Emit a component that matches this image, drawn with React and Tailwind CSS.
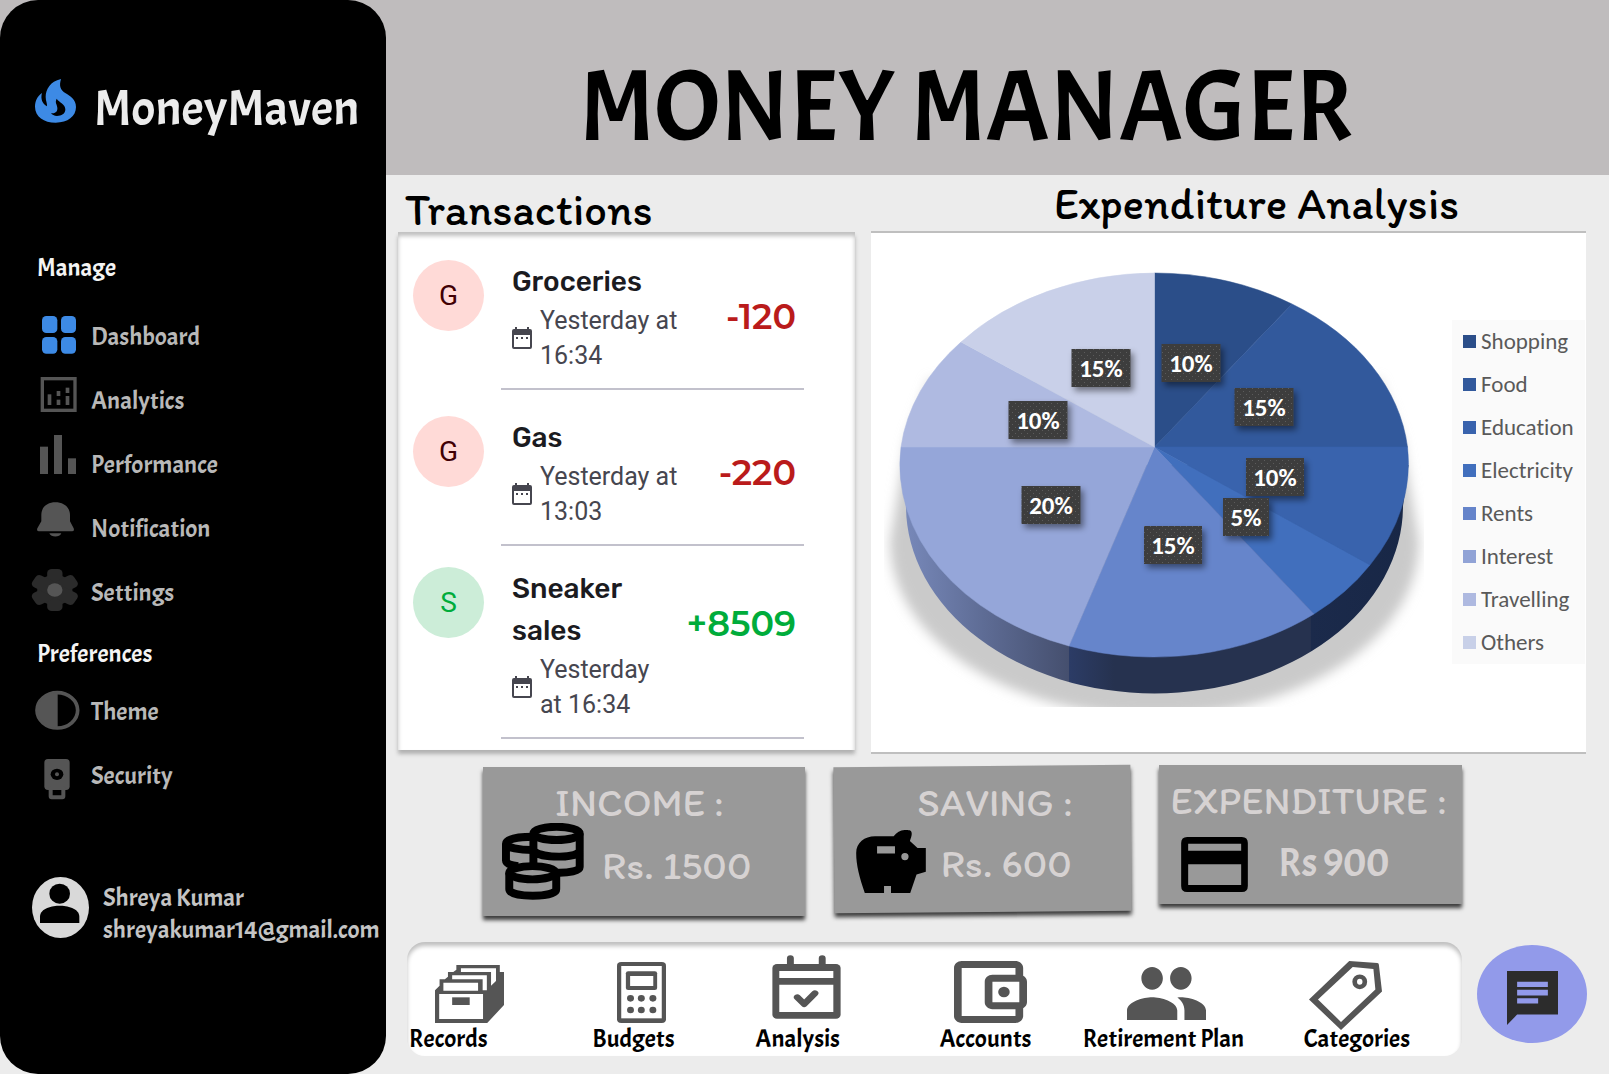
import React from "react";

const display = "font-['Acme','Lato',sans-serif] font-normal";
const rounded = "font-['Itim','Noto_Sans',sans-serif] font-normal";

const manage = [
  {
    label: "Dashboard",
    box: "90 912 150 192",
    art: (
      <g fill="#3d8ae5">
        <rect x="126" y="948" width="46" height="51" rx="13" />
        <rect x="183" y="948" width="45" height="51" rx="13" />
        <rect x="126" y="1011" width="46" height="50" rx="13" />
        <rect x="183" y="1011" width="45" height="50" rx="13" />
      </g>
    ),
  },
  {
    label: "Analytics",
    box: "90 1104 150 192",
    art: (
      <g fill="#555">
        <rect x="127" y="1136" width="98" height="95" fill="none" stroke="#555" strokeWidth="10" />
        <rect x="143" y="1183" width="11" height="32" />
        <rect x="170" y="1173" width="11" height="15" />
        <rect x="170" y="1199" width="11" height="16" />
        <rect x="197" y="1163" width="11" height="16" />
        <rect x="197" y="1188" width="11" height="27" />
      </g>
    ),
  },
  {
    label: "Performance",
    box: "90 36 150 192",
    art: (
      <g fill="#555">
        <rect x="120" y="80" width="24" height="82" />
        <rect x="162" y="45" width="24" height="117" />
        <rect x="204" y="115" width="24" height="47" />
      </g>
    ),
  },
  {
    label: "Notification",
    box: "90 228 150 192",
    art: (
      <g fill="#555">
        <path d="M124 285C124 259 144 247 166 247C189 247 210 260 210 285V304L221 325Q224 334 216 334H117Q109 334 112 325L124 304Z" />
        <path d="M148 340H184C179 353 153 353 148 340Z" />
      </g>
    ),
  },
  {
    label: "Settings",
    box: "90 420 150 192",
    art: (
      <g transform="translate(164.5 510) scale(1.15 1)">
        <g fill="#2b2b2b">
          <circle r="46" />
          <rect x="-20" y="-63" width="40" height="126" rx="12" />
          <rect x="-20" y="-63" width="40" height="126" rx="12" transform="rotate(60)" />
          <rect x="-20" y="-63" width="40" height="126" rx="12" transform="rotate(120)" />
        </g>
        <circle r="20" fill="#555" />
      </g>
    ),
  },
];

const preferences = [
  {
    label: "Theme",
    box: "90 777 150 192",
    art: (
      <g>
        <ellipse cx="172" cy="871" rx="61" ry="53" fill="none" stroke="#555" strokeWidth="11" />
        <path d="M173 818C140 818 111 840 111 871S140 924 173 924Z" fill="#555" />
      </g>
    ),
  },
  {
    label: "Security",
    box: "90 969 150 192",
    art: (
      <g>
        <rect x="133" y="1017" width="76" height="93" rx="11" fill="#555" />
        <rect x="152" y="1104" width="38" height="28" rx="3" fill="none" stroke="#555" strokeWidth="12" />
        <ellipse cx="171" cy="1063" rx="19" ry="17" fill="#000" />
        <ellipse cx="171" cy="1063" rx="6" ry="6" fill="#555" />
      </g>
    ),
  },
];

function MenuList({ items }) {
  return (
    <ul>
      {items.map((item) => (
        <li key={item.label}>
          <a href="#" className="flex h-16 items-center gap-[11px] text-[25px] text-[#b8b8b8]">
            <svg className="h-16 w-[50px] shrink-0" viewBox={item.box} aria-hidden="true">
              {item.art}
            </svg>
            <span className="pt-[3px]">{item.label}</span>
          </a>
        </li>
      ))}
    </ul>
  );
}

function Sidebar() {
  return (
    <aside className={`${display} w-[386px] shrink-0 rounded-[38px] bg-black pl-[30px] pt-[75px]`}>
      <div className="flex h-16 items-center gap-[18px]">
        <svg className="mb-3 ml-[5px] h-11 w-[41px] shrink-0" viewBox="105 237 123 132" aria-hidden="true">
          <path
            fill="#3d8ae5"
            fillRule="evenodd"
            d="M183 237C150 244 137 270 137 291C137 303 142 310 141 319C127 312 121 296 126 279C112 288 105 304 105 320C105 350 132 368 167 368C203 368 228 349 228 321C228 299 210 288 197 280C180 269 177 257 183 237ZM170 296C178 308 196 312 196 328C196 342 184 348 171 348C163 348 156 344 153 339C166 342 173 334 172 323C171 312 164 308 170 296Z"
          />
        </svg>
        <span className="pt-[3px] text-[50px] leading-[64px] text-[#ececec]">MoneyMaven</span>
      </div>
      <nav aria-label="Sidebar">
        <h2 className="mt-[113px] pl-[7px] text-[25px] leading-8 text-[#f4f4f4]">Manage</h2>
        <div className="mt-5">
          <MenuList items={manage} />
        </div>
        <h2 className="mt-[14px] pl-[7px] text-[25px] leading-8 text-[#f4f4f4]">Preferences</h2>
        <div className="mt-[9px]">
          <MenuList items={preferences} />
        </div>
      </nav>
      <div className="mt-[70px] flex items-start gap-[14px]">
        <svg className="ml-0.5 h-[61px] w-[57px] shrink-0" viewBox="96 171 171 183" aria-hidden="true">
          <ellipse cx="181.500" cy="262.500" rx="85.500" ry="91.500" fill="#d9d9d9" />
          <ellipse cx="179" cy="221" rx="31" ry="30" />
          <path d="M120 309V290C120 264 158 257 179 257S238 264 238 290V309Z" />
        </svg>
        <div className="pt-[5px] text-[25px] leading-8 text-[#c4c4c4]">
          <p>Shreya Kumar</p>
          <p>shreyakumar14@gmail.com</p>
        </div>
      </div>
    </aside>
  );
}

const transactions = [
  { name: "Groceries", when: "Yesterday at 16:34", amount: "-120" },
  { name: "Gas", when: "Yesterday at 13:03", amount: "-220" },
  { name: "Sneaker sales", when: "Yesterday at 16:34", amount: "+8509" },
];

function Transactions() {
  return (
    <section>
      <h2 className={`${rounded} flex h-[57px] items-center pl-[7px] pt-3 text-[45px]`}>Transactions</h2>
      <ul className="bg-white pb-[11px] pl-[15px] pr-[51px] pt-2 shadow-[inset_0_4px_4px_rgba(0,0,0,0.25),0_4px_4px_rgba(0,0,0,0.25)]">
        {transactions.map((t) => {
          const income = t.amount.startsWith("+");
          return (
            <li key={t.name} className="flex items-start gap-[17px] pt-5 nth-2:pt-[26px] nth-3:pt-[21px]">
              <span
                className={`flex size-[71px] shrink-0 items-center justify-center rounded-full font-['Roboto',sans-serif] text-[28px] ${
                  income ? "bg-[#ccedd8] text-[#00ac3b]" : "bg-[#ffdad7] text-[#410004]"
                }`}
              >
                {t.name[0]}
              </span>
              <div className="flex flex-1 items-start gap-4 border-b-2 border-[#c2c1cc] pb-[15px] pl-[11px] pr-2">
                <div className="min-w-0 flex-1">
                  <h3 className="pt-px font-['Rubik','Inter',sans-serif] text-[28px] font-medium leading-[42px] text-[#1b1b1f]">
                    {t.name}
                  </h3>
                  <p className="flex items-center gap-2 font-['Roboto',sans-serif] text-[25px] leading-[35px] text-[#46464f]">
                    <svg className="h-[22px] w-5 shrink-0" viewBox="0 0 20 22" aria-hidden="true">
                      <path
                        fill="currentColor"
                        fillRule="evenodd"
                        d="M3 0H5V2H15V0H17V2H18Q20 2 20 4V20Q20 22 18 22H2Q0 22 0 20V4Q0 2 2 2H3ZM2 8V20H18V8ZM4 10H6V12H4ZM9 10H11V12H9ZM14 10H16V12H14Z"
                      />
                    </svg>
                    <span>{t.when}</span>
                  </p>
                </div>
                <span
                  className={`shrink-0 pt-[37px] font-['Montserrat','Inter',sans-serif] text-[35px] font-semibold leading-10 ${
                    income ? "text-[#00ac3b]" : "text-[#ba1b1b]"
                  }`}
                >
                  {t.amount}
                </span>
              </div>
            </li>
          );
        })}
      </ul>
    </section>
  );
}

const legend = [
  { label: "Shopping", swatch: "bg-[#2b4e89]" },
  { label: "Food", swatch: "bg-[#32599c]" },
  { label: "Education", swatch: "bg-[#3963ad]" },
  { label: "Electricity", swatch: "bg-[#416fbd]" },
  { label: "Rents", swatch: "bg-[#6584ca]" },
  { label: "Interest", swatch: "bg-[#91a3d6]" },
  { label: "Travelling", swatch: "bg-[#aeb9e0]" },
  { label: "Others", swatch: "bg-[#c8d0e8]" },
];

const slices = [
  { fill: "#2b4e89", from: "1154.5 273", to: "1292 304" },
  { fill: "#32599c", from: "1292 304", to: "1407.5 447" },
  { fill: "#3963ad", from: "1407.5 447", to: "1370 565" },
  { fill: "#416fbd", from: "1370 565", to: "1314 614" },
  { fill: "#6685cb", from: "1314 614", to: "1069 646" },
  { fill: "#95a6d9", from: "1069 646", to: "901 447" },
  { fill: "#afbae1", from: "901 447", to: "961 342" },
  { fill: "#c9d0e9", from: "961 342", to: "1154.5 273" },
];

const shares = [
  { text: "10%", x: 1191, y: 363, w: 59 },
  { text: "15%", x: 1264, y: 407, w: 59 },
  { text: "10%", x: 1275, y: 477, w: 58 },
  { text: "5%", x: 1246, y: 517, w: 46 },
  { text: "15%", x: 1173, y: 545, w: 58 },
  { text: "20%", x: 1051, y: 505, w: 59 },
  { text: "10%", x: 1038, y: 420, w: 59 },
  { text: "15%", x: 1101, y: 368, w: 59 },
];

function PieChart() {
  return (
    <svg className="min-w-0 flex-1" viewBox="880 260 545 450" role="img" aria-label="Expenditure by category">
      <defs>
        <linearGradient id="rim" x1="903" x2="1406" y1="0" y2="0" gradientUnits="userSpaceOnUse">
          <stop offset="0" stopColor="#7889ba" />
          <stop offset="0.16" stopColor="#5e6c95" />
          <stop offset="0.33" stopColor="#454f6e" />
          <stop offset="0.331" stopColor="#2c3c66" />
          <stop offset="0.42" stopColor="#26324f" />
          <stop offset="0.81" stopColor="#26324f" />
          <stop offset="0.811" stopColor="#1b2a4b" />
          <stop offset="1" stopColor="#182746" />
        </linearGradient>
        <filter id="soft" x="-10%" y="-10%" width="120%" height="120%">
          <feGaussianBlur stdDeviation="6" />
        </filter>
        <filter id="tag" x="-20%" y="-20%" width="150%" height="170%">
          <feDropShadow dx="3" dy="4" stdDeviation="3" floodColor="#000" floodOpacity="0.45" />
        </filter>
        <pattern id="dots" width="6" height="6" patternUnits="userSpaceOnUse">
          <rect width="6" height="6" fill="#3c3c3c" />
          <rect x="1" y="1" width="1" height="1" fill="#5c5c5c" />
          <rect x="4" y="4" width="1" height="1" fill="#5c5c5c" />
        </pattern>
        <clipPath id="plot">
          <rect x="884" y="260" width="540" height="447" />
        </clipPath>
      </defs>
      <g clipPath="url(#plot)">
        <path
          d="M930 380L907 440L890 540C889 640 1010 716 1154 716S1420 640 1419 540L1402 440L1379 380Z"
          fill="#cacaca"
          filter="url(#soft)"
        />
      </g>
      <path d="M900.500 465L906 506A248.500 187.500 0 0 0 1403 506L1408.500 465Z" fill="url(#rim)" />
      {slices.map((s) => (
        <path key={s.fill} fill={s.fill} stroke={s.fill} strokeWidth="0.500" d={`M1154.500 447L${s.from}A254 192 0 0 1 ${s.to}Z`} />
      ))}
      {shares.map((s) => (
        <g key={`${s.x}-${s.y}`}>
          <rect x={s.x - s.w / 2} y={s.y - 19} width={s.w} height="38" fill="url(#dots)" filter="url(#tag)" />
          <text
            x={s.x}
            y={s.y + 9}
            textAnchor="middle"
            fill="#fff"
            className="font-['Carlito','Lato',sans-serif] text-[25px] font-bold"
          >
            {s.text}
          </text>
        </g>
      ))}
    </svg>
  );
}

function Analysis() {
  return (
    <section className="flex flex-col">
      <h2 className={`${rounded} flex h-14 items-center justify-center pl-14 pt-0.5 text-[45px]`}>Expenditure Analysis</h2>
      <div className="flex flex-1 items-start gap-[27px] border-y-2 border-[#bfbfbf] bg-white pb-[42px] pl-[9px] pr-px pt-[27px]">
        <PieChart />
        <ul className="mt-[60px] w-[133px] shrink-0 bg-[#fafafa] font-['Carlito','Lato',sans-serif] text-[23px] leading-[43px] text-[#595959] [font-variant-ligatures:none]">
          {legend.map((l) => (
            <li key={l.label} className="flex items-center gap-[5px] pl-[11px]">
              <span className={`size-[13px] ${l.swatch}`} />
              {l.label}
            </li>
          ))}
        </ul>
      </div>
    </section>
  );
}

const statShade = "bg-[#999] shadow-[0_4px_4px_rgba(0,0,0,0.75)]";

function Stats() {
  return (
    <section className={`${rounded} mt-[11px] grid grid-cols-[321fr_296fr_302fr] items-start gap-[29px] pl-[97px] pr-[147px] text-[40px] leading-10 text-[#d6d2d2]`}>
      <article className={`${statShade} mt-0.5 h-[149px] pl-[19px] pt-[15px]`}>
        <h3 className="pr-7 text-center">INCOME :</h3>
        <div className="flex items-center gap-[18px] pt-px">
          <svg className="h-[77px] w-[82px] shrink-0" viewBox="96 222 248 232" fill="none" stroke="#000" strokeWidth="24" aria-hidden="true">
            <ellipse cx="261" cy="253" rx="70" ry="20" />
            <path d="M191 253V345M331 253V355C331 366 300 373 262 372M195 308C215 328 331 330 331 304" />
            <path d="M190 263C140 263 108 272 108 284S150 303 188 303M108 284V335C108 346 125 350 145 352" />
            <ellipse cx="188" cy="372" rx="70" ry="20" />
            <path d="M118 372V422C118 448 260 448 260 422V372" />
          </svg>
          <p className="pt-[6px]">Rs. 1500</p>
        </div>
      </article>
      <article className="relative mt-px h-[146px] pl-[22px] pt-4">
        <span className={`${statShade} absolute inset-0 -rotate-[0.5deg]`} />
        <h3 className="relative pl-1 text-center">SAVING :</h3>
        <div className="relative flex items-center gap-[15px] pt-2">
          <svg className="h-[63px] w-[70px] shrink-0" viewBox="1155 243 210 190" aria-hidden="true">
            <path
              fillRule="evenodd"
              d="M1340 297H1365V369L1337 377L1318 433H1260V412H1239V433H1181C1165 385 1155 350 1155 312C1155 282 1180 262 1212 262H1268C1280 246 1298 240 1316 244C1326 248 1323 260 1317 276ZM1218 292V314H1272V292ZM1302 312A11 11 0 1 0 1302 334A11 11 0 1 0 1302 312Z"
            />
          </svg>
          <p className="pt-0.5">Rs. 600</p>
        </div>
      </article>
      <article className={`${statShade} h-[139px] pt-[15px]`}>
        <h3 className="pr-1 text-center">EXPENDITURE :</h3>
        <div className="flex items-center gap-[30px] pl-[22px] pt-[17px]">
          <svg className="h-[55px] w-[67px] shrink-0" viewBox="666 264 200 165" aria-hidden="true">
            <path
              fillRule="evenodd"
              d="M684 264H848Q866 264 866 282V411Q866 429 848 429H684Q666 429 666 411V282Q666 264 684 264ZM687 284V305H846V284ZM687 346V408H846V346Z"
            />
          </svg>
          <p className={`${display} pb-[3px]`}>Rs 900</p>
        </div>
      </article>
    </section>
  );
}

const shortcuts = [
  {
    label: "Records",
    size: "ml-[26px] h-[58px] w-[69px]",
    box: "120 108 181 174",
    art: (
      <>
        <path d="M120 184L132 170V151H146L154 143V129H168L176 122V108H290V129H301V228L257 282H120Z" />
        <path fill="#fff" d="M131 195H246V270H131ZM142 161H233V185H142ZM165 139H256V184H245V151H165ZM188 118H280V156L267 170V129H188Z" />
        <path d="M165 205H211V228H165Z" />
      </>
    ),
  },
  {
    label: "Budgets",
    size: "ml-[25px] h-[61px] w-[49px]",
    box: "596 99 127 183",
    art: (
      <>
        <rect x="596" y="99" width="127" height="183" rx="11" />
        <rect x="607" y="111" width="105" height="157" fill="#fff" />
        <rect x="619" y="127" width="81" height="56" rx="6" />
        <rect x="630" y="141" width="60" height="30" fill="#fff" />
        {[631, 659, 689].map((cx) => (
          <g key={cx}>
            <ellipse cx={cx} cy="208" rx="9" ry="10" />
            <ellipse cx={cx} cy="243" rx="9" ry="10" />
          </g>
        ))}
      </>
    ),
  },
  {
    label: "Analysis",
    size: "ml-[17px] mb-1 h-16 w-[69px]",
    box: "1000 78 180 192",
    art: (
      <>
        <rect x="1001" y="105" width="178" height="164" rx="12" />
        <path fill="#fff" d="M1019 126H1160V147H1019ZM1019 167H1160V249H1019Z" />
        <path fill="none" stroke="#555" strokeWidth="18" strokeLinecap="round" strokeLinejoin="round" d="M1048 88V110M1131 88V110M1066 205L1084 225L1112 193" />
      </>
    ),
  },
  {
    label: "Accounts",
    size: "ml-[14px] h-[62px] w-[73px]",
    box: "3 3 19 18",
    art: (
      <>
        <path d="M21 7.280V5c0-1.100-.9-2-2-2H5c-1.110 0-2 .9-2 2v14c0 1.100.89 2 2 2h14c1.100 0 2-.9 2-2v-2.280c.59-.35 1-.98 1-1.720V9c0-.74-.41-1.370-1-1.720zM20 9v6h-7V9h7zM5 19V5h14v2h-6c-1.100 0-2 .9-2 2v6c0 1.100.9 2 2 2h6v2H5z" />
        <circle cx="16" cy="12" r="1.500" />
      </>
    ),
  },
  {
    label: "Retirement Plan",
    size: "ml-11 mb-[3px] h-[53px] w-[79px]",
    box: "1 5 22 14",
    art: (
      <path d="M16 11c1.660 0 2.990-1.340 2.990-3S17.660 5 16 5c-1.660 0-3 1.340-3 3s1.340 3 3 3zm-8 0c1.660 0 2.990-1.340 2.990-3S9.660 5 8 5C6.340 5 5 6.340 5 8s1.340 3 3 3zm0 2c-2.330 0-7 1.170-7 3.500V19h14v-2.500c0-2.330-4.670-3.500-7-3.500zm8 0c-.29 0-.62.02-.97.05 1.160.84 1.970 1.970 1.970 3.450V19h6v-2.500c0-2.330-4.670-3.500-7-3.500z" />
    ),
  },
  {
    label: "Categories",
    size: "ml-[5px] -mb-[7px] h-[69px] w-[73px]",
    box: "799 99 187 206",
    art: (
      <path
        fillRule="evenodd"
        d="M902 99L974 105Q978 106 978 110L986 190L881 305L799 214ZM911 117L822 214L881 281L969 184L964 123ZM929 139A19 22 0 1 0 929 183A19 22 0 1 0 929 139ZM929 152A7 9 0 1 1 929 170A7 9 0 1 1 929 152Z"
      />
    ),
  },
];

function BottomBar() {
  return (
    <div className="mt-[26px] flex items-start gap-[15px] pb-[17px] pl-[21px] pr-[22px]">
      <nav
        aria-label="Shortcuts"
        className={`${display} grid h-[114px] flex-1 grid-cols-[183fr_163fr_184fr_143fr_221fr_158fr] rounded-[18px] bg-white pl-0.5 text-[25px] text-black shadow-[inset_0_4px_4px_rgba(0,0,0,0.25)]`}
      >
        {shortcuts.map((s) => (
          <a key={s.label} href="#" className="flex flex-col items-start justify-end pb-px">
            <svg className={`${s.size} shrink-0`} viewBox={s.box} preserveAspectRatio="none" fill="#555" aria-hidden="true">
              {s.art}
            </svg>
            <span className="whitespace-nowrap leading-8">{s.label}</span>
          </a>
        ))}
      </nav>
      <button
        type="button"
        aria-label="Open chat"
        className="mt-[3px] flex h-[98px] w-[110px] items-center justify-center rounded-[50%] bg-[#929aea] pt-2"
      >
        <svg className="h-[54px] w-[51px]" viewBox="1303 130 131 161" preserveAspectRatio="none" aria-hidden="true">
          <path
            fill="#2c2c2c"
            fillRule="evenodd"
            d="M1303 130H1434V260H1329L1303 291ZM1329 162V178H1408V162ZM1329 186V203H1408V186ZM1329 211V227H1383V211Z"
          />
        </svg>
      </button>
    </div>
  );
}

export default function App() {
  return (
    <div className="flex min-h-screen bg-[linear-gradient(#bfbcbd_175px,#ececec_175px)] text-black">
      <Sidebar />
      <main className="min-w-0 flex-1">
        <header className="flex h-[175px] items-center justify-center pr-[62px] pt-10">
          <h1 className={`${display} text-[100px] leading-none`}>MONEY MANAGER</h1>
        </header>
        <div className="grid grid-cols-[457fr_715fr] gap-4 pl-3 pr-[23px]">
          <Transactions />
          <Analysis />
        </div>
        <Stats />
        <BottomBar />
      </main>
    </div>
  );
}
